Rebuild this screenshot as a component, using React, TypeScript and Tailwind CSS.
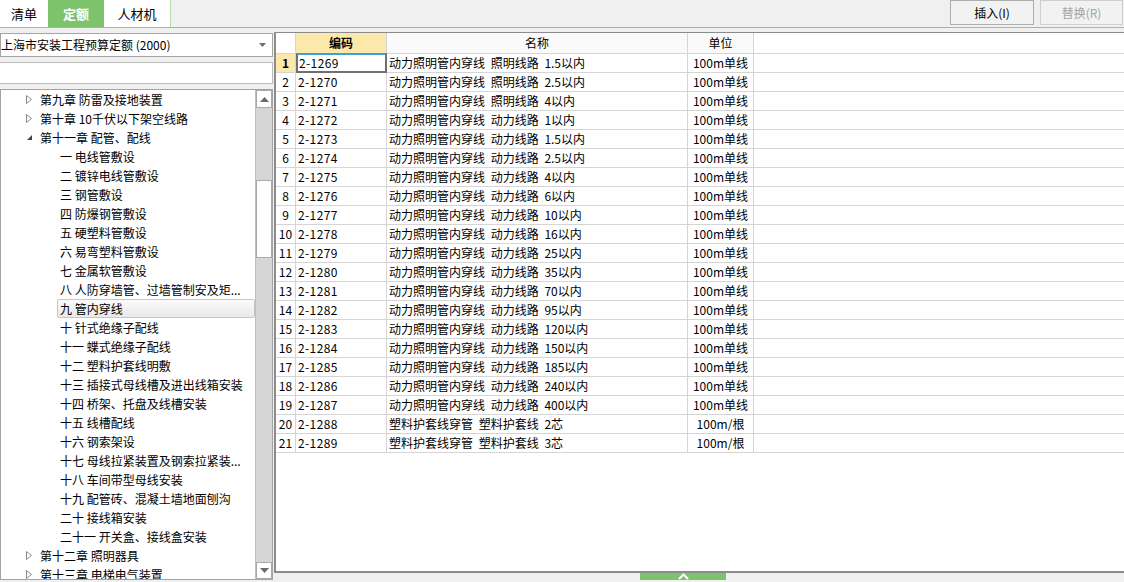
import React from "react";

const names: [string, string, string][] = [
  ["2-1269", "动力照明管内穿线 照明线路 1.5以内", "100m单线"],
  ["2-1270", "动力照明管内穿线 照明线路 2.5以内", "100m单线"],
  ["2-1271", "动力照明管内穿线 照明线路 4以内", "100m单线"],
  ["2-1272", "动力照明管内穿线 动力线路 1以内", "100m单线"],
  ["2-1273", "动力照明管内穿线 动力线路 1.5以内", "100m单线"],
  ["2-1274", "动力照明管内穿线 动力线路 2.5以内", "100m单线"],
  ["2-1275", "动力照明管内穿线 动力线路 4以内", "100m单线"],
  ["2-1276", "动力照明管内穿线 动力线路 6以内", "100m单线"],
  ["2-1277", "动力照明管内穿线 动力线路 10以内", "100m单线"],
  ["2-1278", "动力照明管内穿线 动力线路 16以内", "100m单线"],
  ["2-1279", "动力照明管内穿线 动力线路 25以内", "100m单线"],
  ["2-1280", "动力照明管内穿线 动力线路 35以内", "100m单线"],
  ["2-1281", "动力照明管内穿线 动力线路 70以内", "100m单线"],
  ["2-1282", "动力照明管内穿线 动力线路 95以内", "100m单线"],
  ["2-1283", "动力照明管内穿线 动力线路 120以内", "100m单线"],
  ["2-1284", "动力照明管内穿线 动力线路 150以内", "100m单线"],
  ["2-1285", "动力照明管内穿线 动力线路 185以内", "100m单线"],
  ["2-1286", "动力照明管内穿线 动力线路 240以内", "100m单线"],
  ["2-1287", "动力照明管内穿线 动力线路 400以内", "100m单线"],
  ["2-1288", "塑料护套线穿管 塑料护套线 2芯", "100m/根"],
  ["2-1289", "塑料护套线穿管 塑料护套线 3芯", "100m/根"],
];

type TreeItem = { text: string; level: 0 | 1; state?: "open" | "closed"; selected?: boolean };

const tree: TreeItem[] = [
  { text: "第九章 防雷及接地装置", level: 0, state: "closed" },
  { text: "第十章 10千伏以下架空线路", level: 0, state: "closed" },
  { text: "第十一章 配管、配线", level: 0, state: "open" },
  { text: "一 电线管敷设", level: 1 },
  { text: "二 镀锌电线管敷设", level: 1 },
  { text: "三 钢管敷设", level: 1 },
  { text: "四 防爆钢管敷设", level: 1 },
  { text: "五 硬塑料管敷设", level: 1 },
  { text: "六 易弯塑料管敷设", level: 1 },
  { text: "七 金属软管敷设", level: 1 },
  { text: "八 人防穿墙管、过墙管制安及矩...", level: 1 },
  { text: "九 管内穿线", level: 1, selected: true },
  { text: "十 针式绝缘子配线", level: 1 },
  { text: "十一 蝶式绝缘子配线", level: 1 },
  { text: "十二 塑料护套线明敷", level: 1 },
  { text: "十三 插接式母线槽及进出线箱安装", level: 1 },
  { text: "十四 桥架、托盘及线槽安装", level: 1 },
  { text: "十五 线槽配线", level: 1 },
  { text: "十六 钢索架设", level: 1 },
  { text: "十七 母线拉紧装置及钢索拉紧装...", level: 1 },
  { text: "十八 车间带型母线安装", level: 1 },
  { text: "十九 配管砖、混凝土墙地面刨沟", level: 1 },
  { text: "二十 接线箱安装", level: 1 },
  { text: "二十一 开关盒、接线盒安装", level: 1 },
  { text: "第十二章 照明器具", level: 0, state: "closed" },
  { text: "第十三章 电梯电气装置", level: 0, state: "closed" },
];

function Expander({ state }: { state: "open" | "closed" }) {
  return (
    <svg width="7" height="9" viewBox="0 0 7 9">
      {state === "closed" ? (
        <polygon points="0.5,0.5 5.5,4.5 0.5,8.5" fill="white" stroke="#8a8a8a" strokeWidth="1" />
      ) : (
        <polygon points="6,2 6,7 1,7" fill="#444" />
      )}
    </svg>
  );
}

export default function App() {
  return (
    <div className="w-[1124px] h-[582px] bg-[#f0f0f0] overflow-hidden text-black font-['Noto_Sans_CJK_SC','Microsoft_YaHei',sans-serif]">
      {/* top bar */}
      <div className="h-[28px] flex border-b border-[#8fca7f]">
        <div className="w-[48px] h-[27px] bg-white flex items-center justify-center text-[13px]">清单</div>
        <div className="w-[56px] h-[27px] bg-[#7dc36b] text-white font-bold flex items-center justify-center text-[13px]">定额</div>
        <div className="w-[67px] h-[27px] bg-white border-r border-[#b6dcac] flex items-center justify-center text-[13px]">人材机</div>
        <div className="flex-1" />
        <div className="w-[84px] h-[25px] border border-[#adadad] bg-[#f2f2f2] flex items-center justify-center text-[12px]">插入(I)</div>
        <div className="w-[6px]" />
        <div className="w-[83px] h-[25px] border border-[#cfcfcf] bg-[#f2f2f2] flex items-center justify-center text-[12px] text-[#a3a3a3]">替换(R)</div>
        <div className="w-[1px]" />
      </div>

      <div className="mt-[4px] flex h-[550px]">
        {/* left panel */}
        <div className="w-[273px] flex flex-col">
          <div className="mt-[1px] h-[24px] border border-[#a5a5a5] bg-white flex items-center pl-[0px] pr-[6px] text-[12px]">
            <span className="flex-1 whitespace-nowrap">上海市安装工程预算定额 (2000)</span>
            <svg width="7" height="4" viewBox="0 0 7 4">
              <polygon points="0,0 7,0 3.5,4" fill="#6d6d6d" />
            </svg>
          </div>
          <div className="mt-[5px] h-[22px] border border-l-0 border-[#bdbdbd] bg-white" />
          <div className="mt-[5px] h-[491px] border border-[#a3a3a3] bg-white flex overflow-hidden">
            <div className="w-[254px] overflow-hidden">
              {tree.map((t, i) =>
                t.level === 0 ? (
                  <div key={i} className="h-[19px] flex items-center text-[12px] whitespace-nowrap">
                    <div className="w-[25px]" />
                    <div className="w-[14px] flex items-center">
                      <Expander state={t.state!} />
                    </div>
                    <span>{t.text}</span>
                  </div>
                ) : (
                  <div key={i} className="h-[19px] flex items-center text-[12px] whitespace-nowrap">
                    <div
                      className={
                        t.selected
                          ? "ml-[56px] flex-1 h-[19px] flex items-center pl-[2px] border border-[#c6c6c6] rounded-[2px] bg-gradient-to-b from-[#fbfbfb] to-[#e9e9e9]"
                          : "ml-[56px] flex-1 h-[19px] flex items-center pl-[3px]"
                      }
                    >
                      {t.text}
                    </div>
                  </div>
                )
              )}
            </div>
            <div className="w-[17px] flex flex-col bg-[#d6d6d6] border-l border-[#bdbdbd]">
              <div className="h-[18px] bg-white border border-[#a8a8a8] flex items-center justify-center">
                <svg width="9" height="5" viewBox="0 0 9 5">
                  <polygon points="0,5 9,5 4.5,0" fill="#6b6b6b" />
                </svg>
              </div>
              <div className="flex-1 flex flex-col">
                <div className="h-[72px]" />
                <div className="h-[78px] bg-white border border-[#a8a8a8]" />
              </div>
              <div className="h-[17px] bg-white border border-[#a8a8a8] flex items-center justify-center">
                <svg width="9" height="5" viewBox="0 0 9 5">
                  <polygon points="0,0 9,0 4.5,5" fill="#6b6b6b" />
                </svg>
              </div>
            </div>
          </div>
        </div>

        {/* grid panel */}
        <div className="ml-[1px] flex-1 flex flex-col">
          <div className="h-[541px] bg-white border-l-2 border-t border-b-2 border-[#8c8c8c] overflow-hidden">
            <div className="flex h-[21px] border-b border-[#d5d5d5] text-[12px]">
              <div className="w-[20px] border-r border-[#d5d5d5] bg-white" />
              <div className="w-[91px] border-r border-[#d5d5d5] bg-[#fde8ac] font-bold flex items-center justify-center">编码</div>
              <div className="w-[301px] border-r border-[#d5d5d5] bg-[#fafafa] flex items-center justify-center">名称</div>
              <div className="w-[66px] border-r border-[#d5d5d5] bg-[#fafafa] flex items-center justify-center">单位</div>
            </div>
            {names.map((r, i) => (
              <div key={i} className="flex h-[19px] border-b border-[#d5d5d5] text-[12px] leading-[18px]">
                <div
                  className={
                    i === 0
                      ? "w-[20px] border-r border-[#d5d5d5] bg-[#fde8ac] font-bold flex items-center justify-center"
                      : "w-[20px] border-r border-[#d5d5d5] flex items-center justify-center"
                  }
                >
                  {i + 1}
                </div>
                {i === 0 ? (
                  <div className="w-[91px] border-2 border-[#6f6f6f] border-t-[#3aa0db] -mt-[1px] h-[20px] pl-[1px] flex items-center tracking-[0.4px]">{r[0]}</div>
                ) : (
                  <div className="w-[91px] border-r border-[#d5d5d5] pl-[2px] flex items-center tracking-[0.4px]">{r[0]}</div>
                )}
                <div className="w-[301px] border-r border-[#d5d5d5] pl-[2px] flex items-center whitespace-nowrap [word-spacing:3px]">{r[1]}</div>
                <div className="w-[66px] border-r border-[#d5d5d5] flex items-center justify-center whitespace-nowrap">{r[2]}</div>
              </div>
            ))}
          </div>
          <div className="flex">
            <div className="ml-[366px] w-[86px] h-[7px] bg-[#7dc36b] flex items-end justify-center">
              <svg width="11" height="7" viewBox="0 0 11 7">
                <polyline points="1,6 5.5,1.5 10,6" fill="none" stroke="white" strokeWidth="2" />
              </svg>
            </div>
          </div>
        </div>
      </div>
    </div>
  );
}
